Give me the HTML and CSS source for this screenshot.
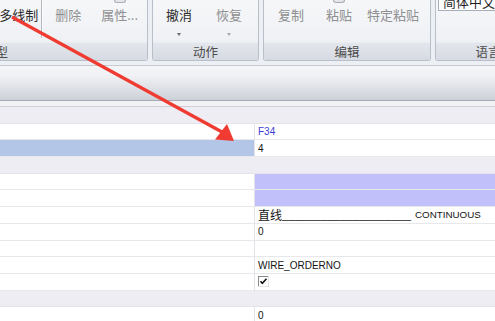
FILE: index.html
```html
<!DOCTYPE html>
<html lang="zh-CN">
<head>
  <meta charset="UTF-8">
  <title>属性</title>
  <link rel="stylesheet" href="styles.css">
</head>
<body>
  <div class="ribbon">
    <div class="groups">
      <div class="group group-model">
        <div class="group-body">
          <div class="btn">多线制</div>
          <div class="sep"></div>
          <div class="btn btn-off btn-delete">删除</div>
          <div class="btn btn-off btn-props"><span class="icon-stub"></span>属性...</div>
        </div>
        <div class="group-label">模型</div>
      </div>
      <div class="group group-action">
        <div class="group-body">
          <div class="btn">撤消<span class="drop"></span></div>
          <div class="btn btn-off btn-redo">恢复<span class="drop"></span></div>
        </div>
        <div class="group-label">动作</div>
      </div>
      <div class="group group-edit">
        <div class="group-body">
          <div class="btn btn-off">复制</div>
          <div class="btn btn-off btn-paste"><span class="icon-stub"></span>粘贴</div>
          <div class="btn btn-off btn-special">特定粘贴</div>
        </div>
        <div class="group-label">编辑</div>
      </div>
      <div class="group group-lang">
        <div class="group-body">
          <div class="lang-box">简体中文</div>
        </div>
        <div class="group-label">语言</div>
      </div>
    </div>
  </div>

  <div class="toolbar"></div>
  <div class="grid-top"></div>

  <div class="grid">
    <div class="row row-cat"></div>
    <div class="row"><div class="name"></div><div class="value value-link">F34</div></div>
    <div class="row"><div class="name name-selected"></div><div class="value">4</div></div>
    <div class="row row-cat"></div>
    <div class="row"><div class="name"></div><div class="value value-color"></div></div>
    <div class="row"><div class="name"></div><div class="value value-color"></div></div>
    <div class="row"><div class="name"></div><div class="value"><span class="line-name">直线</span><span class="line-fill">____________________</span><span class="line-type">CONTINUOUS</span></div></div>
    <div class="row"><div class="name"></div><div class="value">0</div></div>
    <div class="row"><div class="name"></div><div class="value"></div></div>
    <div class="row"><div class="name"></div><div class="value">WIRE_ORDERNO</div></div>
    <div class="row"><div class="name"></div><div class="value">
      <svg class="check" width="11" height="11" viewBox="0 0 11 11">
        <rect x="0" y="0" width="11" height="11" fill="#e2e2e2"/>
        <rect x="0" y="0" width="10" height="10" fill="#8a8a8a"/>
        <rect x="1" y="1" width="9" height="9" fill="#ffffff"/>
        <path d="M2.5 5.2 L4.3 7.2 L8.5 2.8" fill="none" stroke="#111" stroke-width="1.6"/>
      </svg>
    </div></div>
    <div class="row row-cat"></div>
    <div class="row"><div class="name"></div><div class="value">0</div></div>
  </div>

  <svg class="arrow" width="495" height="321" viewBox="0 0 495 321">
    <line x1="12" y1="17" x2="222" y2="132" stroke="#ef3b31" stroke-width="3.2"/>
    <polygon points="215,139.5 234,141 227,124" fill="#ef3b31"/>
  </svg>
</body>
</html>
```

FILE: styles.css
```css
* {
  box-sizing: border-box;
}

body {
  margin: 0;
  width: 495px;
  height: 321px;
  overflow: hidden;
  position: relative;
  background: #ffffff;
  font-family: "Noto Sans CJK SC", sans-serif;
}

/* ribbon */

.ribbon {
  height: 62px;
  background: #eceff3;
  overflow: hidden;
}

.groups {
  display: flex;
  gap: 4px;
  margin-left: -157px;
}

.group {
  height: 61px;
  display: flex;
  flex-direction: column;
  flex-shrink: 0;
  border: 1px solid #b9bfc9;
  border-top: none;
  border-radius: 0 0 3px 3px;
  background: linear-gradient(#f6f7f9, #eceef2);
}

.group-model { width: 305px; }
.group-action { width: 107px; }
.group-edit { width: 168px; }
.group-lang { width: 106px; }

.group-body {
  flex: 1;
  display: flex;
  align-items: flex-start;
}

.group-label {
  height: 18px;
  line-height: 17px;
  text-align: center;
  font-size: 12.5px;
  color: #4c4c4c;
  background: linear-gradient(#e3e6ec, #d6dae2);
  border-top: 1px solid #e9ecf0;
}

.btn {
  position: relative;
  display: flex;
  flex-direction: column;
  align-items: center;
  margin-top: 7px;
  font-size: 13px;
  line-height: 16px;
  color: #2c2c2c;
  white-space: nowrap;
}

.btn-off {
  color: #8f9092;
}

/* bottom edge of the button icon, cut by the top of the view */
.icon-stub {
  position: absolute;
  top: -7px;
  left: 50%;
  width: 12px;
  height: 3px;
  margin-left: -6px;
  border: 1px solid #a9adb5;
  border-top: none;
  border-radius: 0 0 3px 3px;
  background: #e3e5ea;
}

.drop {
  margin-top: 10px;
  width: 0;
  height: 0;
  border-left: 2.5px solid transparent;
  border-right: 2.5px solid transparent;
  border-top: 3px solid #6a6a6a;
}

.btn-redo .drop {
  border-top-color: #a8a8a8;
}

.group-model .group-body {
  justify-content: flex-end;
  padding-right: 9px;
}

.sep {
  width: 2px;
  height: 38px;
  margin-left: 3px;
  border-left: 1px solid #b2b7bf;
  border-right: 1px solid #fbfbfc;
}

.btn-delete { margin-left: 12px; }
.btn-props { margin-left: 20px; }

.group-action .group-body {
  padding-left: 13px;
  gap: 24px;
}

.group-edit .group-body {
  padding-left: 14px;
}

.btn-paste { margin-left: 22px; }
.btn-special { margin-left: 15px; }

.lang-box {
  margin-top: -8px;
  margin-left: 2px;
  width: 120px;
  height: 19px;
  padding-left: 4px;
  font-size: 13px;
  line-height: 18px;
  color: #1e1e1e;
  background: #ffffff;
  border: 1px solid #a7afbb;
}

/* toolbar strip */

.toolbar {
  height: 39px;
  padding-top: 3px;
  background:
    linear-gradient(#f3f4f6, #f0f1f4 20%, #c8cdd5) 0 4px / 100% 34px no-repeat,
    #f4f5f7;
  border-top: 3px solid #eceff3;
  box-shadow: inset 0 1px 0 #c7cbd2;
  border-bottom: 1px solid #a5aab2;
}

.grid-top {
  height: 6px;
  background: #f2f2f5;
  border-bottom: 1px solid #cfd0d8;
}

/* property grid */

.row {
  height: 16.7px;
  display: grid;
  grid-template-columns: 255px 1fr;
  border-bottom: 1px solid #e8e8ec;
}

.row-cat {
  display: block;
  background: #eeedf3;
  border-bottom-color: #e4e3ea;
}

.name {
  border-right: 1px solid #e3e3e9;
}

.name-selected {
  background: #b3c6e7;
}

.value {
  padding-left: 3px;
  display: flex;
  align-items: center;
  font-family: "Liberation Sans", sans-serif;
  font-size: 10px;
  color: #141414;
  white-space: pre;
  overflow: hidden;
}

.value-link {
  color: #3d3dd6;
}

.value-color {
  background: #c2c0fb;
}

.line-name {
  font-family: "Noto Sans CJK SC", sans-serif;
  font-size: 12px;
}

.line-fill {
  font-size: 11.6px;
}

.line-type {
  margin-left: 4px;
  font-size: 9.8px;
}

.check {
  display: block;
}

.arrow {
  position: absolute;
  left: 0;
  top: 0;
  pointer-events: none;
}
```
